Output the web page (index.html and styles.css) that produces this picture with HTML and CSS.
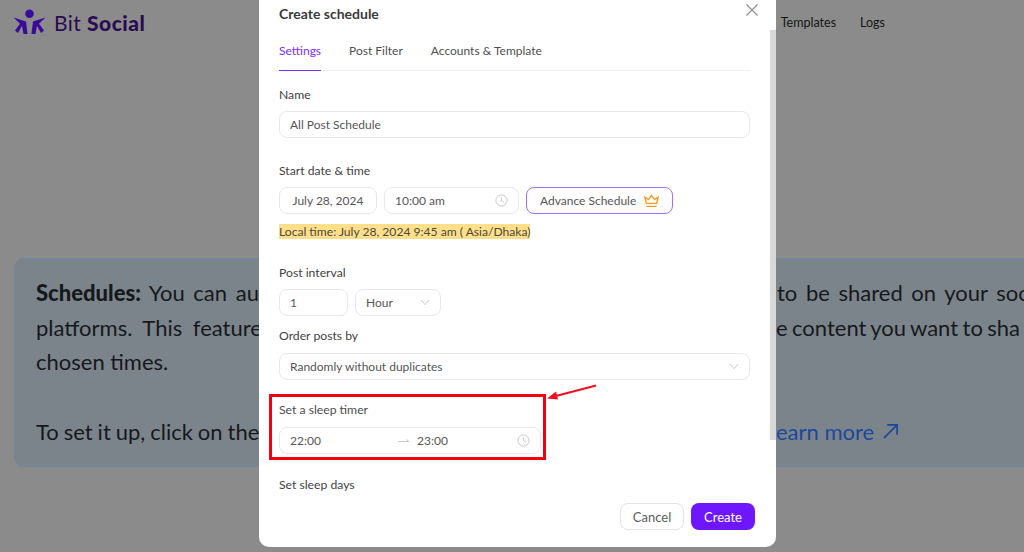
FILE: index.html
```html
<!DOCTYPE html>
<html lang="en">
<head>
<meta charset="utf-8">
<title>Create schedule</title>
<link rel="stylesheet" href="styles.css">
</head>
<body>
<div class="page">
  <header class="topbar">
    <div class="brand">
      <svg class="brand-icon" viewBox="0 0 34 26" aria-hidden="true">
        <circle cx="16.500" cy="4.800" r="4.300"/>
        <path d="M0.500 8.500 L13 12.500 L14.500 25 L10.500 25 L9 16.800 L5 24 L2 21.500 L7 14.800 Z"/>
        <path d="M32.500 8.500 L20 12.500 L18.500 25 L22.500 25 L24 16.800 L28 24 L31 21.500 L26 14.800 Z"/>
      </svg>
      <span class="brand-name">Bit <b>Social</b></span>
    </div>
    <nav class="nav">
      <a>Templates</a>
      <a>Logs</a>
    </nav>
  </header>
  <section class="notice">
    <p class="line wide"><span class="left"><b>Schedules:</b> You can au</span><span class="right r1">to be shared on your soc</span></p>
    <p class="line"><span class="left wider">platforms. This feature</span><span class="right r2">e content you want to sha</span></p>
    <p class="line"><span class="left">chosen times.</span></p>
    <p class="line gap"><span class="left tight">To set it up, click on the</span><span class="right r3"><a class="more">earn more <svg class="more-arrow" viewBox="0 0 18 18" aria-hidden="true"><path d="M2 16 L16 2 M5.500 2 H16 V12.500"/></svg></a></span></p>
  </section>
</div>

<div class="overlay">
  <div class="modal">
    <button class="close" aria-label="Close">
      <svg viewBox="0 0 12 12" aria-hidden="true"><path d="M.5 .5 L11.500 11.500 M11.500 .5 L.5 11.500"/></svg>
    </button>
    <h2 class="title">Create schedule</h2>
    <div class="tabs">
      <span class="tab active">Settings</span>
      <span class="tab">Post Filter</span>
      <span class="tab">Accounts &amp; Template</span>
    </div>

    <div class="form">
      <label class="label l-name">Name</label>
      <div class="field full">All Post Schedule</div>

      <label class="label l-start">Start date &amp; time</label>
      <div class="row">
        <div class="field date">July 28, 2024</div>
        <div class="field time">10:00 am
          <svg class="clock" viewBox="0 0 14 14" aria-hidden="true"><circle cx="7" cy="7" r="6"/><path d="M7 3.500 V7.500 L9.500 9"/></svg>
        </div>
        <button class="advance">Advance Schedule
          <svg class="crown" viewBox="0 0 16 14" aria-hidden="true"><path d="M2.500 9.500 L1 3 L4.800 5.500 L8 1 L11.200 5.500 L15 3 L13.500 9.500 Z M2.500 12.700 H13.500"/></svg>
        </button>
      </div>
      <div class="local"><mark>Local time: July 28, 2024 9:45 am ( Asia/Dhaka)</mark></div>

      <label class="label l-interval">Post interval</label>
      <div class="row interval">
        <div class="field num">1</div>
        <div class="field unit">Hour
          <svg class="chev" viewBox="0 0 12 8" aria-hidden="true"><path d="M1 1 L6 6.500 L11 1"/></svg>
        </div>
      </div>

      <label class="label l-order">Order posts by</label>
      <div class="field full order">Randomly without duplicates
        <svg class="chev" viewBox="0 0 12 8" aria-hidden="true"><path d="M1 1 L6 6.500 L11 1"/></svg>
      </div>

      <label class="label l-sleep">Set a sleep timer</label>
      <div class="field range">
        <span class="from">22:00</span>
        <svg class="range-arrow" viewBox="0 0 12 6" aria-hidden="true"><path d="M0 3.500 H11 M8.500 1.500 L11 3.500"/></svg>
        <span class="to">23:00</span>
        <svg class="clock" viewBox="0 0 14 14" aria-hidden="true"><circle cx="7" cy="7" r="6"/><path d="M7 3.500 V7.500 L9.500 9"/></svg>
      </div>

      <label class="label l-days">Set sleep days</label>
    </div>

    <div class="footer">
      <button class="btn ghost">Cancel</button>
      <button class="btn primary">Create</button>
    </div>

    <div class="thumb"></div>
    <div class="callout"></div>
    <svg class="callout-arrow" viewBox="0 0 52 20" aria-hidden="true">
      <path class="shaft" d="M50 1.500 L8 12.500"/>
      <path class="head" d="M1 14.500 L10 7.500 L12 15.500 Z"/>
    </svg>
  </div>
</div>
</body>
</html>
```
FILE: styles.css
```css
* { box-sizing: border-box; }
html, body { margin: 0; height: 100%; overflow: hidden; }
body {
  font-family: "Lato", "Noto Sans", sans-serif;
  background: #8b8b8b;
  color: #111;
}
.page { width: 1024px; height: 552px; overflow: hidden; }

.topbar {
  display: flex;
  align-items: center;
  justify-content: space-between;
  height: 44px;
  padding: 0 139px 0 13px;
}
.brand { display: flex; align-items: center; gap: 7px; }
.brand-icon { width: 34px; height: 26px; fill: #3a0a9c; }
.brand-name { font-size: 21px; color: #2a0b52; letter-spacing: .45px; }
.brand-name b { font-weight: 900; }
.nav { display: flex; gap: 24px; font-size: 12.500px; color: #151515; }

.notice {
  width: 1100px;
  height: 209px;
  margin: 214px 0 0 14px;
  padding: 17px 21px;
  background: #7c848b;
  border: 1px solid #6c87a3;
  border-radius: 10px;
  font-size: 22px;
  color: #16191c;
}
.line { display: flex; margin: 0; height: 34.500px; line-height: 34.500px; white-space: nowrap; }
.line.gap { margin-top: 35px; }
.line.wide { word-spacing: 3px; }
.left { width: 700px; flex: none; }
.left.wider { word-spacing: 5px; }
.left.tight { word-spacing: -.7px; }
.left b { font-weight: 900; }
.right.r1 { margin-left: 41px; }
.right.r2 { margin-left: 40px; word-spacing: -1.200px; }
.right.r3 { margin-left: 40px; }
.more { color: #1c489c; display: inline-flex; align-items: center; gap: 8px; }
.more-arrow { width: 17px; height: 17px; fill: none; stroke: #1c489c; stroke-width: 1.800; }

.overlay {
  position: fixed;
  inset: 0;
  padding-left: 259px;
}
.modal {
  position: relative;
  width: 517px;
  height: 557px;
  margin-top: -10px;
  padding: 12px 20px 0;
  background: #fff;
  border-radius: 10px;
  color: #4d4d4d;
  font-size: 12px;
  overflow: hidden;
}
.close {
  position: absolute;
  top: 14px;
  right: 18px;
  width: 12px;
  height: 12px;
  padding: 0;
  border: 0;
  background: none;
}
.close svg { display: block; width: 12px; height: 12px; fill: none; stroke: #8c8c8c; stroke-width: 1.100; }
.title { margin: 0; padding-top: 2px; font-size: 14px; line-height: 20px; font-weight: 700; color: #3a3a3a; }

.tabs {
  display: flex;
  gap: 28px;
  margin-top: 18px;
  height: 29px;
  border-bottom: 1px solid #f0f0f0;
  margin-right: 6px;
}
.tab { font-size: 12px; line-height: 18px; color: #4f4f4f; height: 29px; }
.tab.active { color: #7c2dff; border-bottom: 1px solid #7c2dff; }

.form { display: flex; flex-direction: column; align-items: flex-start; height: 426px; overflow: hidden; }
.label { display: block; line-height: 16px; color: #3f3f3f; font-size: 12.200px; }
.l-name { margin-top: 16px; }
.l-start { margin-top: 25px; }
.l-interval { margin-top: 25px; }
.l-order { margin-top: 12px; }
.l-sleep { margin-top: 22px; color: #4d4d4d; }
.l-days { margin-top: 23px; }

.field {
  display: flex;
  align-items: center;
  height: 27px;
  margin-top: 8px;
  padding: 0 10px;
  background: #fff;
  border: 1px solid #e8e8e8;
  border-radius: 8px;
  color: #565656;
  white-space: nowrap;
}
.full { width: 471px; }
.row { display: flex; gap: 7px; }
.date { width: 98px; justify-content: center; }
.time { width: 135px; justify-content: space-between; }
.advance {
  display: flex;
  align-items: center;
  justify-content: space-between;
  width: 147px;
  height: 27px;
  margin-top: 8px;
  padding: 0 13px;
  background: #fff;
  border: 1px solid #a070ff;
  border-radius: 8px;
  font: inherit;
  color: #565656;
}
.clock { width: 13px; height: 13px; fill: none; stroke: #c4c4c4; stroke-width: 1; }
.crown { width: 15px; height: 14px; fill: none; stroke: #f59a23; stroke-width: 1.500; }
.local { margin-top: 10px; line-height: 16px; font-size: 12.100px; }
.local mark { background: #ffdf8a; color: #4a4a3a; padding: 0; }
.num { width: 69px; }
.unit { width: 86px; justify-content: space-between; }
.chev { width: 10px; height: 7px; fill: none; stroke: #bbb; stroke-width: 1; }
.order { justify-content: space-between; margin-top: 9px; }
.range { width: 262px; margin-top: 9px; }
.from { width: 108px; }
.range-arrow { width: 12px; height: 6px; fill: none; stroke: #c8c8c8; stroke-width: 1; }
.to { margin-left: 7px; flex: 1; }

.footer {
  position: absolute;
  right: 21px;
  top: 513px;
  display: flex;
  gap: 7px;
  font-size: 13px;
}
.btn { height: 27px; border-radius: 8px; font: inherit; }
.ghost { width: 64px; background: #fff; border: 1px solid #e4e4e4; color: #5c5c5c; }
.primary { width: 64px; background: #6e17ff; border: 0; color: #fff; }

.thumb {
  position: absolute;
  right: 0;
  top: 40px;
  width: 6px;
  height: 410px;
  background: #d8d8d8;
}
.callout {
  position: absolute;
  left: 10px;
  top: 404px;
  width: 277px;
  height: 66px;
  border: 3px solid #f2000f;
}
.callout-arrow {
  position: absolute;
  left: 287px;
  top: 394px;
  width: 52px;
  height: 20px;
}
.shaft { stroke: #f01020; stroke-width: 2.200; fill: none; }
.head { fill: #f01020; }
```
